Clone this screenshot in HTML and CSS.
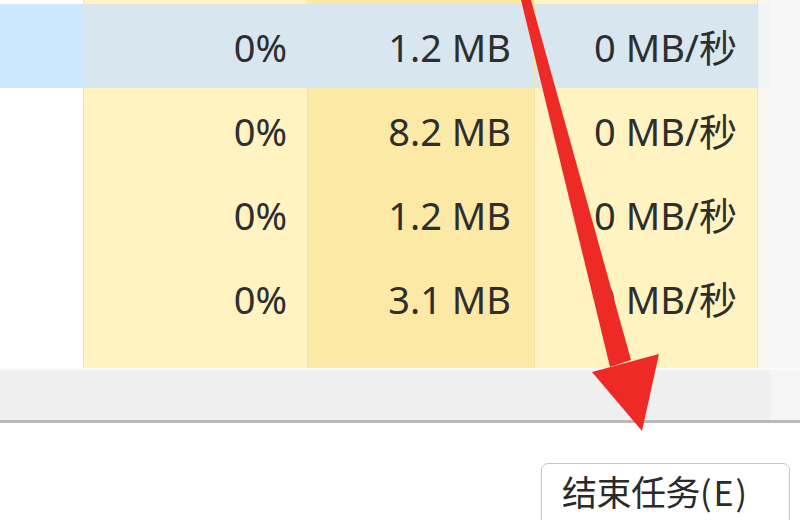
FILE: index.html
```html
<!DOCTYPE html>
<html lang="zh-CN">
<head>
<meta charset="utf-8">
<title>任务管理器</title>
<link rel="stylesheet" href="styles.css">
</head>
<body>
<div class="app">
  <div class="table">
    <div class="row row-top">
      <div class="cell c-name"></div>
      <div class="cell c-cpu"></div>
      <div class="cell c-mem"></div>
      <div class="cell c-disk"></div>
      <div class="cell c-gap"></div>
      <div class="cell c-side"></div>
    </div>
    <div class="row row-data selected">
      <div class="cell c-name"></div>
      <div class="cell c-cpu">0%</div>
      <div class="cell c-mem">1.2 MB</div>
      <div class="cell c-disk">0 MB/秒</div>
      <div class="cell c-gap"></div>
      <div class="cell c-side"></div>
    </div>
    <div class="row row-data">
      <div class="cell c-name"></div>
      <div class="cell c-cpu">0%</div>
      <div class="cell c-mem">8.2 MB</div>
      <div class="cell c-disk">0 MB/秒</div>
      <div class="cell c-gap"></div>
      <div class="cell c-side"></div>
    </div>
    <div class="row row-data">
      <div class="cell c-name"></div>
      <div class="cell c-cpu">0%</div>
      <div class="cell c-mem">1.2 MB</div>
      <div class="cell c-disk">0 MB/秒</div>
      <div class="cell c-gap"></div>
      <div class="cell c-side"></div>
    </div>
    <div class="row row-data">
      <div class="cell c-name"></div>
      <div class="cell c-cpu">0%</div>
      <div class="cell c-mem">3.1 MB</div>
      <div class="cell c-disk">0 MB/秒</div>
      <div class="cell c-gap"></div>
      <div class="cell c-side"></div>
    </div>
    <div class="row row-fill">
      <div class="cell c-name"></div>
      <div class="cell c-cpu"></div>
      <div class="cell c-mem"></div>
      <div class="cell c-disk"></div>
      <div class="cell c-gap"></div>
      <div class="cell c-side"></div>
    </div>
  </div>
  <div class="hscroll">
    <div class="hs-main"></div>
    <div class="hs-side"></div>
  </div>
  <div class="footer">
    <button class="end-btn">结束任务<span class="mn">(E)</span></button>
  </div>
  <svg class="arrow" width="800" height="520" viewBox="0 0 800 520">
    <polygon points="521,0 531,0 631,360 610,367" fill="#ee2a26"/>
    <polygon points="592,372 659,354 642,431" fill="#ee2a26"/>
  </svg>
</div>
</body>
</html>
```

FILE: styles.css
```css
* { box-sizing: border-box; }
html, body { margin: 0; padding: 0; background: #ffffff; }
.app {
  position: relative;
  width: 800px;
  height: 520px;
  overflow: hidden;
  display: flex;
  flex-direction: column;
  font-family: "Noto Sans", "Noto Sans CJK SC", sans-serif;
  color: #2e2e2e;
}
.table { display: flex; flex-direction: column; flex-shrink: 0; }
.row { display: flex; flex-shrink: 0; }
.row-top { height: 4px; }
.row-data { height: 84px; }
.row-fill { height: 28px; }
.cell {
  display: flex;
  align-items: center;
  justify-content: flex-end;
  font-size: 38px;
  line-height: 1;
  padding-top: 2px;
}
.c-name { width: 84px; background: #ffffff; border-right: 1px solid #efe4b8; }
.c-cpu { width: 224px; background: #fff3c2; padding-right: 20px; border-right: 1px solid #f3e4a6; }
.c-mem { width: 227px; background: #fce9a6; padding-right: 23px; border-right: 1px solid #f3e4a6; }
.c-disk { width: 223px; background: #fff3c2; padding-right: 20px; border-right: 1px solid #ebe0b6; }
.c-gap { width: 12px; background: #f8f6ee; }
.c-side { width: 30px; background: #f7f7f8; }
.selected .c-name { background: #cce8ff; }
.selected .c-cpu,
.selected .c-mem,
.selected .c-disk { background: #d8e7ef; }
.selected .c-gap { background: #f0f4f7; }
.hscroll {
  display: flex;
  flex-shrink: 0;
  height: 55px;
  border-top: 2px solid #fbfbfb;
  border-bottom: 3px solid #b9b9b9;
}
.hs-main { width: 770px; background: #efefef; }
.hs-side { width: 30px; background: #f5f5f5; }
.footer {
  flex-shrink: 0;
  display: flex;
  justify-content: flex-end;
  align-items: flex-start;
  padding: 40px 10px 0 0;
}
.end-btn {
  width: 249px;
  height: 80px;
  border: 1px solid #c6c6c6;
  border-radius: 7px;
  background: #ffffff;
  font-family: "Noto Sans CJK SC", sans-serif;
  font-size: 35px;
  color: #2a2a2a;
  text-align: left;
  padding: 0 0 26px 20px;
  letter-spacing: -0.5px;
  white-space: nowrap;
}
.mn { font-size: 34px; letter-spacing: 2px; }
.arrow { position: absolute; left: 0; top: 0; pointer-events: none; }
```
